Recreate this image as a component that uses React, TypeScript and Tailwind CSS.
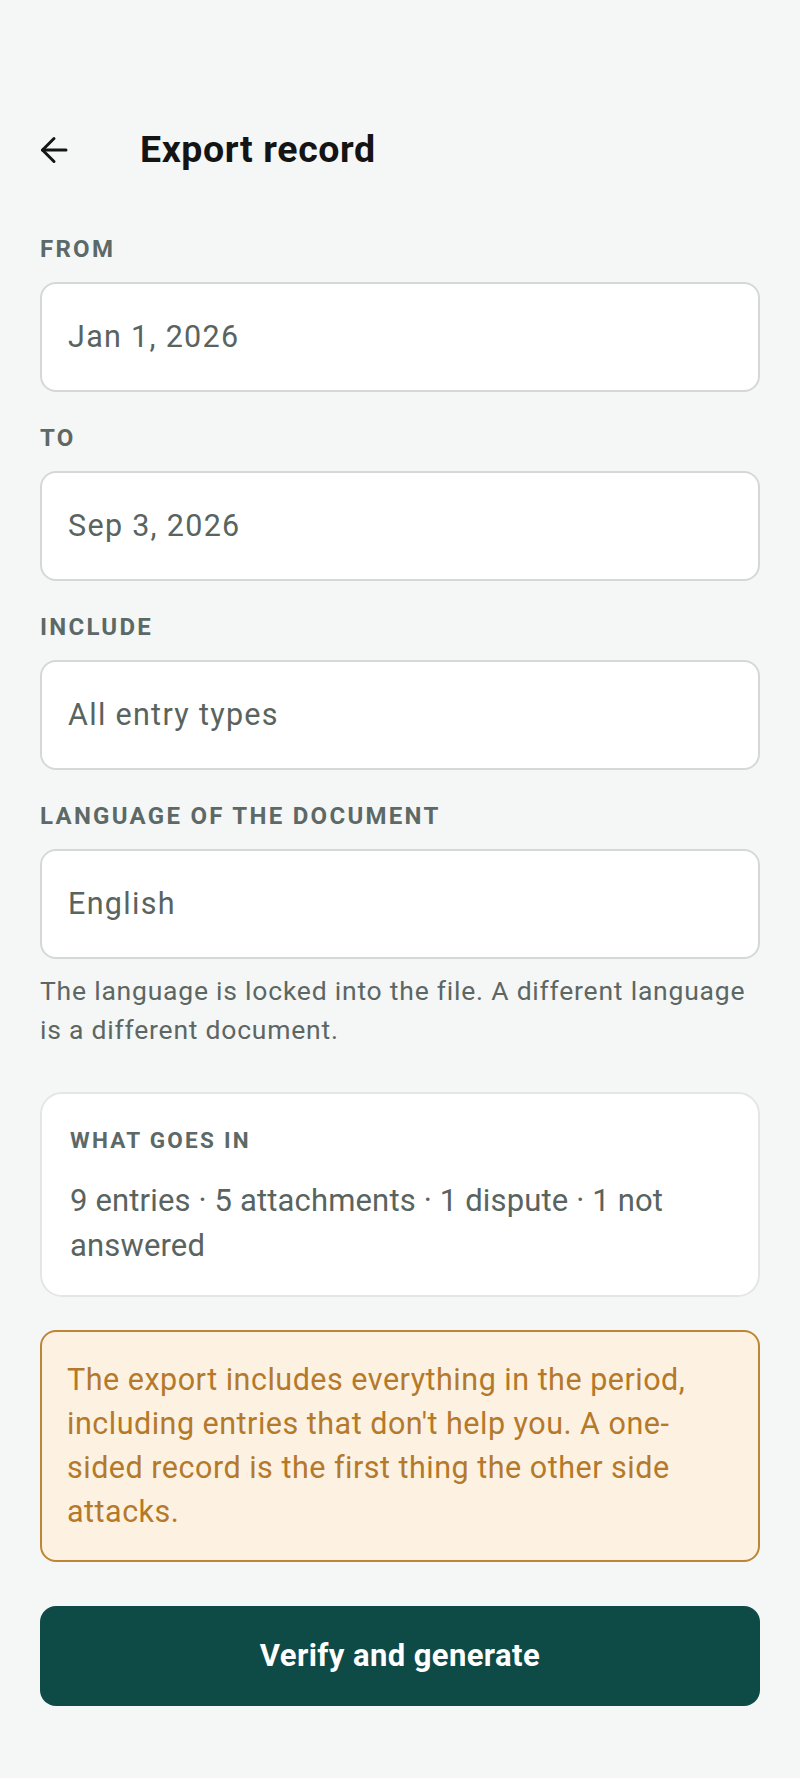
import React from 'react'

const fieldLabel =
  "text-[24px] leading-[30px] font-bold tracking-[0.095em] text-[#5c6966] uppercase"

function Field({ label, value, first }: { label: string; value: string; first?: boolean }) {
  return (
    <div className={first ? "" : "mt-[31px]"}>
      <div className={fieldLabel}>{label}</div>
      <div className="mt-[18px] h-[110px] rounded-[16px] border-2 border-[#d4d9d8] bg-white flex items-center px-[26px]">
        <span className="text-[30.5px] tracking-[1.3px] text-[#59645f]">{value}</span>
      </div>
    </div>
  )
}

export default function App() {
  return (
    <div className="min-h-[1778px] bg-[#f5f7f7] px-[40px] font-['Roboto','Liberation_Sans',sans-serif]">
      {/* Top bar */}
      <div className="pt-[122px] h-[178px] flex items-center">
        <button aria-label="Back" className="w-[28px] h-[28px] flex items-center justify-center">
          <svg width="28" height="28" viewBox="0 0 28 28" fill="none" stroke="#151515" strokeWidth="3" strokeLinecap="round" strokeLinejoin="round">
            <path d="M26 14H2.5" />
            <path d="M14 2.5L2.5 14L14 25.5" />
          </svg>
        </button>
        <h1 className="ml-[72px] text-[37.5px] tracking-[0.6px] font-bold text-[#141414] leading-none">Export record</h1>
      </div>

      {/* Form */}
      <div className="mt-[56px]">
        <Field label="From" value="Jan 1, 2026" first />
        <Field label="To" value="Sep 3, 2026" />
        <Field label="Include" value="All entry types" />
        <Field label="Language of the document" value="English" />
        <p className="mt-[12px] text-[26.5px] leading-[39px] tracking-[0.78px] text-[#5c6663]">
          The language is locked into the file. A different language is a different document.
        </p>
      </div>

      {/* Summary */}
      <div className="mt-[43px] rounded-[22px] border-2 border-[#e2e7e6] bg-white px-[28px] pt-[31px] pb-[27px]">
        <div className="text-[22.5px] leading-[30px] font-bold tracking-[0.1em] text-[#5c6966]">WHAT GOES IN</div>
        <p className="mt-[23px] text-[31px] leading-[45px] tracking-[0.15px] text-[#59645f]">
          9 entries · 5 attachments · 1 dispute · 1 not answered
        </p>
      </div>

      {/* Warning */}
      <div className="mt-[33px] rounded-[16px] border-2 border-[#bd8535] bg-[#fdf2e2] px-[25px] py-[26px]">
        <p className="text-[30.5px] leading-[44px] tracking-[0.5px] text-[#b4792a]">
          The export includes everything in the period, including entries that don't help you. A one-sided record is the first thing the other side attacks.
        </p>
      </div>

      {/* Action */}
      <button className="mt-[44px] w-full h-[100px] rounded-[16px] bg-[#0e4b47] text-white text-[31px] tracking-[0.4px] font-bold">
        Verify and generate
      </button>
    </div>
  )
}
